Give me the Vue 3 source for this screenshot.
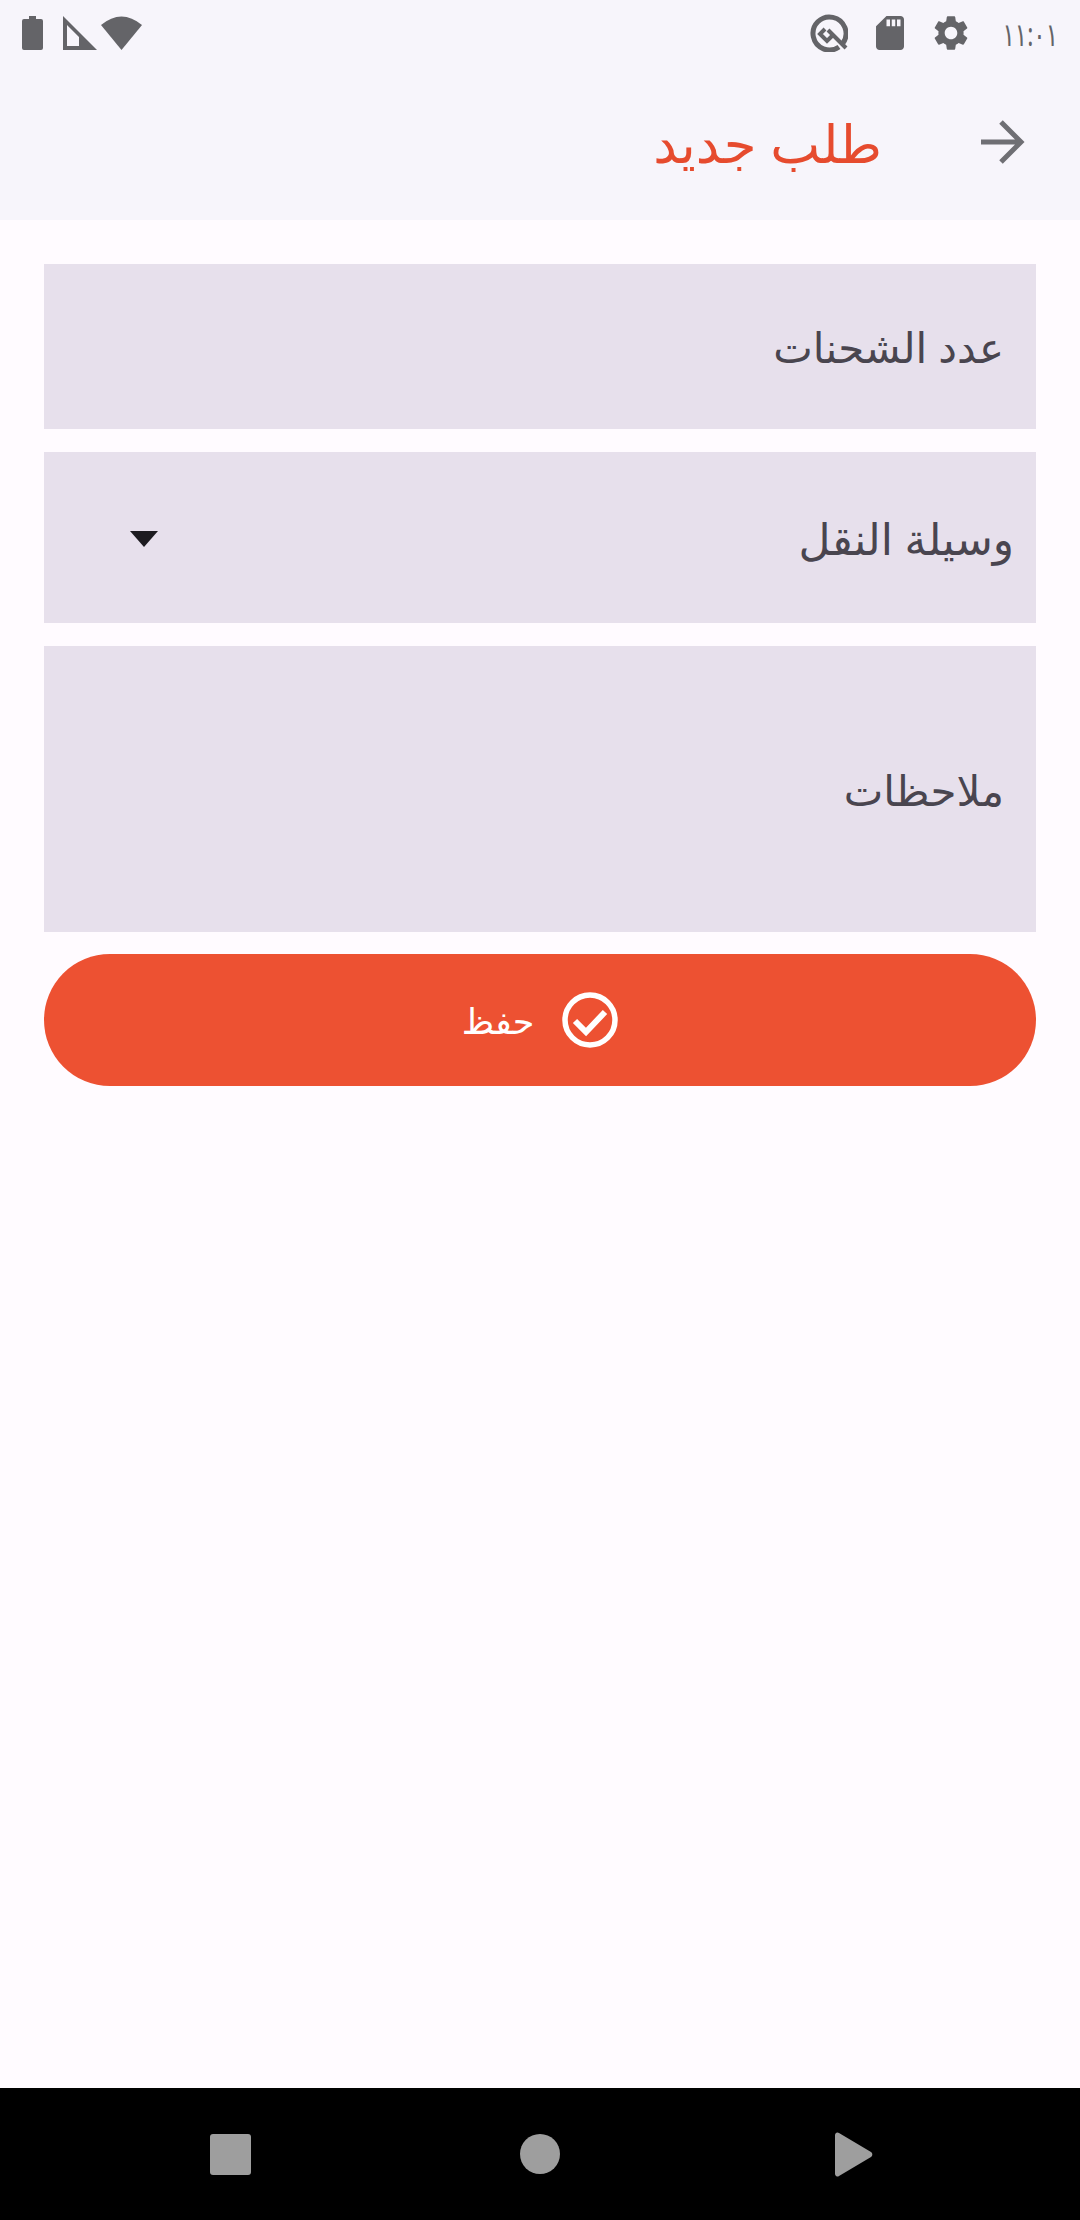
<template>
  <div class="screen">
    <header class="appbar">
      <div class="status">
        <div class="status-left">
          <svg width="21" height="34" viewBox="0 0 21 34"><path d="M7 0h7v3h5a2 2 0 0 1 2 2v27a2 2 0 0 1-2 2H2a2 2 0 0 1-2-2V5a2 2 0 0 1 2-2h5z" fill="#646468"/></svg>
          <svg width="34" height="34" viewBox="0 0 34 34"><path fill-rule="evenodd" d="M0 0l34 34H0zM4 9v21h12v-9z" fill="#646468"/></svg>
          <svg width="41" height="34" viewBox="0 0 41 34"><path d="M0 9Q20.500-8 41 9L20.500 34z" fill="#646468"/></svg>
        </div>
        <div class="status-right">
          <svg width="38" height="38" viewBox="0 0 38 38" fill="none" stroke="#646468" stroke-width="5"><path d="M29 33A16.500 16.500 0 1 1 33 29"/><path d="M15 15l-5 5 7 7 5-5" stroke-width="4"/><path d="M18 16l18 18" stroke-width="4"/></svg>
          <svg width="28" height="34" viewBox="4 2 16 20" preserveAspectRatio="none"><path d="M18 2h-8L4.020 8 4 20c0 1.100.9 2 2 2h12c1.100 0 2-.9 2-2V4c0-1.100-.9-2-2-2zm-6 6h-2V4h2v4zm3 0h-2V4h2v4zm3 0h-2V4h2v4z" fill="#646468"/></svg>
          <svg class="gear" width="42" height="42" viewBox="0 0 24 24"><path d="M19.140 12.940c.04-.3.06-.61.06-.94 0-.32-.02-.64-.07-.94l2.030-1.580c.18-.14.23-.41.12-.61l-1.920-3.320c-.12-.22-.37-.29-.59-.22l-2.390.96c-.5-.38-1.030-.7-1.620-.94l-.36-2.540c-.04-.24-.24-.41-.48-.41h-3.840c-.24 0-.43.17-.47.41l-.36 2.540c-.59.24-1.130.57-1.620.94l-2.390-.96c-.22-.08-.47 0-.59.22L2.740 8.870c-.12.21-.08.47.12.61l2.030 1.580c-.05.3-.09.63-.09.94s.02.64.07.94l-2.030 1.580c-.18.14-.23.41-.12.61l1.920 3.320c.12.22.37.29.59.22l2.390-.96c.5.38 1.030.7 1.620.94l.36 2.540c.05.24.24.41.48.41h3.840c.24 0 .44-.17.47-.41l.36-2.540c.59-.24 1.130-.56 1.620-.94l2.390.96c.22.08.47 0 .59-.22l1.920-3.320c.12-.22.07-.47-.12-.61l-2.010-1.580zM12 15.600c-1.980 0-3.600-1.620-3.600-3.600s1.620-3.600 3.600-3.600 3.600 1.620 3.600 3.600-1.620 3.600-3.600 3.600z" fill="#646468"/></svg>
          <span class="clock">١١:٠١</span>
        </div>
      </div>
      <div class="toolbar">
        <svg class="back" width="46" height="46" viewBox="0 0 46 46" fill="none" stroke="#6f6f74" stroke-width="5"><path d="M1 23h41M21 3l20 20-20 20"/></svg>
        <h1 class="title">طلب جديد</h1>
      </div>
    </header>

    <main class="form">
      <div class="field field-count">
        <span class="label">عدد الشحنات</span>
      </div>
      <div class="field field-select">
        <span class="label">وسيلة النقل</span>
        <span class="caret"></span>
      </div>
      <div class="field field-notes">
        <span class="label">ملاحظات</span>
      </div>
      <button class="save" type="button">
        <svg width="56" height="56" viewBox="0 0 56 56" fill="none" stroke="#fff" stroke-width="5.500"><circle cx="28" cy="28" r="25"/><path d="M13 29l11 11 19-20" stroke-width="6"/></svg>
        <span>حفظ</span>
      </button>
    </main>

    <nav class="navbar">
      <span class="nav-square"></span>
      <span class="nav-circle"></span>
      <svg width="38" height="45" viewBox="0 0 38 45"><path d="M4 1L36 20a3 3 0 0 1 0 5L4 44a2.500 2.500 0 0 1-4-2V3a2.500 2.500 0 0 1 4-2z" fill="#9e9e9e"/></svg>
    </nav>
  </div>
</template>

<script setup>
</script>

<style>
html, body { margin: 0; background: #fffbff; }
</style>

<style scoped>
.screen {
  width: 1080px;
  height: 2220px;
  display: flex;
  flex-direction: column;
  background: #fffbff;
  font-family: "Noto Sans", "DejaVu Sans", sans-serif;
  overflow: hidden;
}

.appbar { background: #f7f5fb; height: 220px; flex: none; }

.status {
  height: 66px;
  display: flex;
  justify-content: space-between;
  padding: 16px 22px 0 22px;
  box-sizing: border-box;
}
.status-left { display: flex; gap: 20px; height: 34px; }
.status-left svg:last-child { margin-left: -16px; }
.status-right { display: flex; align-items: center; height: 34px; }
.status-right svg:first-child { margin-right: 28px; }
.status-right svg:nth-child(2) { margin-right: 26px; }
.gear { margin-right: 30px; }
.clock { font-size: 23px; color: #646468; direction: ltr; unicode-bidi: isolate; transform: scaleY(1.4); }

.toolbar {
  height: 154px;
  display: flex;
  flex-direction: row-reverse;
  align-items: center;
  padding: 0 54px 0 0;
  margin-top: -1px;
}
.title {
  margin: 0 98px 0 0;
  font-size: 53px;
  font-weight: 400;
  color: #e64b2e;
}

.form {
  flex: 1;
  display: flex;
  flex-direction: column;
  gap: 23px;
  padding: 44px 44px 0;
}
.field {
  background: #e7e0ec;
  display: flex;
  align-items: center;
  color: #49454f;
  font-size: 42px;
}
.field-count { height: 165px; justify-content: flex-end; padding-right: 32px; }
.field-select { height: 171px; justify-content: space-between; flex-direction: row-reverse; padding: 0 22px 0 86px; font-size: 44px; }
.field-notes { height: 286px; justify-content: flex-end; padding-right: 32px; }

.caret {
  width: 0;
  height: 0;
  margin-top: 2px;
  border-left: 14px solid transparent;
  border-right: 14px solid transparent;
  border-top: 16px solid #1d1b20;
}

.save {
  height: 132px;
  margin-top: -1px;
  border: none;
  border-radius: 66px;
  background: #ed5132;
  color: #fff;
  font-family: inherit;
  font-size: 35px;
  display: flex;
  flex-direction: row-reverse;
  align-items: center;
  justify-content: center;
  gap: 28px;
  padding: 0;
}

.navbar {
  height: 132px;
  flex: none;
  background: #000;
  display: flex;
  align-items: center;
  position: relative;
  padding-left: 210px;
}
.nav-square { width: 41px; height: 41px; border-radius: 3px; background: #9e9e9e; margin-right: 269px; }
.nav-circle { width: 40px; height: 40px; border-radius: 50%; background: #9e9e9e; margin-right: 275px; }
</style>
